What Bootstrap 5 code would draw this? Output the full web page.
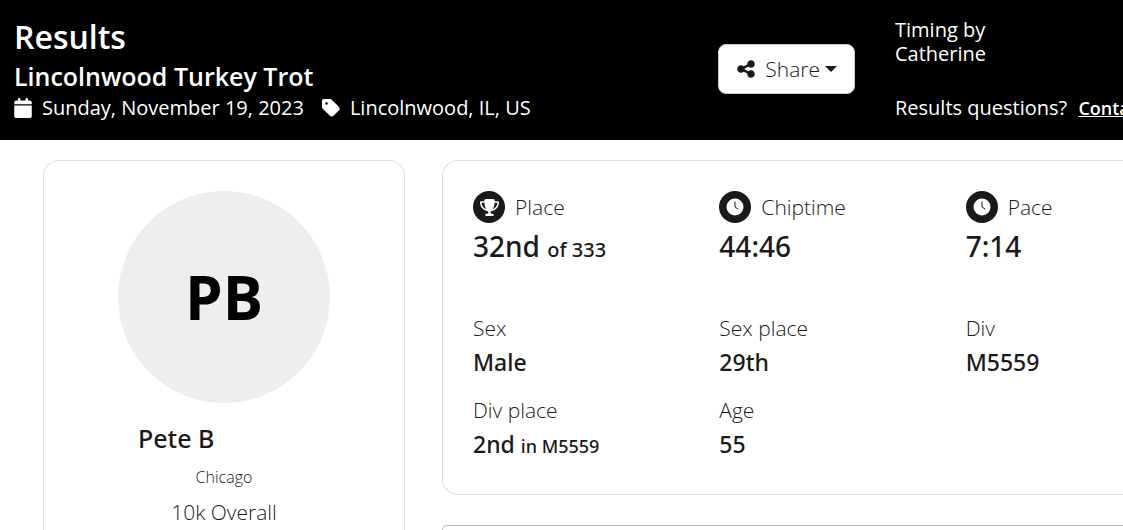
<!DOCTYPE html>
<html lang="en">
<head>
<meta charset="utf-8">
<meta name="viewport" content="width=device-width, initial-scale=1">
<title>Results - Lincolnwood Turkey Trot</title>
<link rel="stylesheet" href="https://cdn.jsdelivr.net/npm/bootstrap@5.3.0/dist/css/bootstrap.min.css">
<style>
  body { font-family: "Open Sans", "Noto Sans", sans-serif; font-size: 21px; font-weight: 300; line-height: 24px; color: #1a1a1a; overflow-x: hidden; }
  svg { fill: currentColor; flex: none; }
  .icon-gap { gap: 10px; }
  .event-bar { display: grid; grid-template-columns: 1fr auto 228px; column-gap: 40px; background: #000; color: #fff; font-size: 20px; font-weight: 400; padding: 18px 0 20px 14px; }
  .event-bar h1 { font-size: 32px; font-weight: 600; line-height: 38px; }
  .event-bar h2 { font-size: 25px; font-weight: 600; line-height: 40px; }
  .event-meta { column-gap: 18px; }
  .share-btn { --bs-btn-border-radius: 8px; font-size: 21px; font-weight: 300; line-height: 30px; padding: 9px 17px 9px 18px; background: #fff; border-color: #ccc; color: #1a1a1a; }
  .share-btn::after { margin-left: -5px; }
  .questions { margin-top: 30px; }
  .contact-link { font-size: 18px; font-weight: 600; line-height: 20px; margin-left: 6px; }
  .page-body { display: grid; grid-template-columns: 362px minmax(0, 1fr); column-gap: 37px; padding: 20px 0 0 43px; }
  .panel { border: 1px solid #dedede; border-radius: 16px; }
  .panel-wide { border-right: 0; border-radius: 16px 0 0 16px; }
  .panel-next { border-color: #b8b8b8; border-bottom: 0; border-radius: 8px 0 0 0; margin-top: 30px; padding: 2px; }
  .profile { border-bottom: 0; border-radius: 16px 16px 0 0; padding: 30px 20px 5px; }
  .avatar { width: 212px; height: 212px; background: #eee; color: #000; font-size: 60px; font-weight: 700; }
  .runner { font-family: "Noto Sans", sans-serif; font-size: 25px; font-weight: 500; line-height: 32px; width: 172px; margin: 19px 0 11px; }
  .town { font-size: 16px; margin-bottom: 11px; }
  .stats { display: grid; grid-template-columns: 37.9% 37.9% 24.2%; padding: 30px 0 32px 30px; }
  .stat-icon { width: 32px; height: 32px; background: #1a1a1a; color: #fff; }
  .stats dt { font-weight: 300; line-height: 22px; }
  .stats dd { font-size: 23px; font-family: "Noto Sans", sans-serif; font-weight: 500; line-height: 32px; margin: 7px 0 21px; }
  .stats dd span { font-size: 18px; }
  .stats .headline dd { font-size: 28px; line-height: 36px; margin: 5px 0 49px; }
  .stats .headline dd span { font-size: 20px; }
  .stats .last dd { margin-bottom: 0; }
</style>
</head>
<body>
<header class="event-bar">
  <div>
    <h1 class="m-0">Results</h1>
    <h2 class="m-0">Lincolnwood Turkey Trot</h2>
    <div class="event-meta d-flex text-nowrap">
      <div class="icon-gap d-flex align-items-center">
        <svg width="18" height="20" viewBox="0 0 448 512" aria-hidden="true"><path d="M96 32V64H48C21.500 64 0 85.500 0 112v48H448V112c0-26.500-21.500-48-48-48H352V32c0-17.700-14.300-32-32-32s-32 14.300-32 32V64H160V32c0-17.700-14.300-32-32-32S96 14.300 96 32zM448 192H0V464c0 26.500 21.500 48 48 48H400c26.500 0 48-21.500 48-48V192z"/></svg>
        <span>Sunday, November 19, 2023</span>
      </div>
      <div class="icon-gap d-flex align-items-center">
        <svg width="18" height="18" viewBox="32 32 448 448" aria-hidden="true"><path d="M32 80v149.500c0 17 6.700 33.300 18.700 45.300l176 176c25 25 65.500 25 90.500 0L450.700 317.300c25-25 25-65.500 0-90.500l-176-176C262.700 38.700 246.500 32 229.500 32H80C53.500 32 32 53.500 32 80zm112 32a32 32 0 1 1 0 64 32 32 0 1 1 0-64z"/></svg>
        <span>Lincolnwood, IL, US</span>
      </div>
    </div>
  </div>
  <div class="dropdown align-self-center">
    <button class="btn share-btn dropdown-toggle icon-gap d-flex align-items-center" type="button" data-bs-toggle="dropdown" aria-expanded="false"><svg width="18" height="20" viewBox="0 0 448 512" aria-hidden="true"><path d="M352 224c53 0 96-43 96-96s-43-96-96-96-96 43-96 96c0 4 .2 8 .7 11.900l-94.100 47C145.400 170.200 121.900 160 96 160c-53 0-96 43-96 96s43 96 96 96c25.900 0 49.400-10.200 66.600-26.900l94.100 47c-.5 3.900-.7 7.800-.7 11.900 0 53 43 96 96 96s96-43 96-96-43-96-96-96c-25.900 0-49.400 10.200-66.600 26.900l-94.100-47c.5-3.900.7-7.800.7-11.900s-.2-8-.7-11.900l94.100-47C302.600 213.800 326.100 224 352 224z"/></svg>Share</button>
    <ul class="dropdown-menu"><li><a class="dropdown-item" href="#">Copy link</a></li></ul>
  </div>
  <div class="text-nowrap overflow-hidden">
    <div>Timing by<br>Catherine</div>
    <div class="questions">Results questions? <a class="contact-link text-white" href="#">Contact</a></div>
  </div>
</header>

<main class="page-body">
  <section class="panel profile d-flex flex-column align-items-center">
    <div class="avatar rounded-circle d-flex align-items-center justify-content-center">PB</div>
    <div class="runner">Pete B</div>
    <div class="town">Chicago</div>
    <div>10k Overall</div>
  </section>
  <div>
    <dl class="panel panel-wide stats mb-0">
      <div class="headline">
        <dt class="icon-gap d-flex align-items-center"><span class="stat-icon rounded-circle d-flex align-items-center justify-content-center"><svg width="19" height="17" viewBox="0 0 576 512" aria-hidden="true"><path d="M400 0H176c-26.500 0-48.100 21.800-47.100 48.200.2 5.300.4 10.600.7 15.800H24C10.700 64 0 74.700 0 88c0 92.600 33.500 157 78.500 200.700 44.300 43.100 98.300 64.800 138.100 75.800 23.400 6.500 39.400 26 39.400 45.600 0 20.900-17 37.900-37.900 37.900H192c-17.700 0-32 14.300-32 32s14.300 32 32 32H384c17.700 0 32-14.300 32-32s-14.300-32-32-32H357.900C337 448 320 431 320 410.100c0-19.600 15.900-39.200 39.400-45.600 39.900-11 93.900-32.700 138.200-75.800C542.500 245 576 180.600 576 88c0-13.300-10.700-24-24-24H446.400c.3-5.200.5-10.400.7-15.800C448.100 21.800 426.500 0 400 0zM48.900 112h84.400c9.100 90.100 29.200 150.300 51.900 190.600-24.900-11-50.800-26.500-73.200-48.300-32-31.100-58-76-63-142.300zM464.100 254.300c-22.400 21.800-48.300 37.300-73.200 48.300 22.700-40.300 42.800-100.500 51.900-190.600h84.400c-5.100 66.300-31.100 111.200-63.100 142.300z"/></svg></span><span>Place</span></dt>
        <dd>32nd <span>of 333</span></dd>
      </div>
      <div class="headline">
        <dt class="icon-gap d-flex align-items-center"><span class="stat-icon rounded-circle d-flex align-items-center justify-content-center"><svg width="18" height="18" viewBox="0 0 18 18" aria-hidden="true"><circle cx="9" cy="9" r="8.500"/><path d="M9 4v5l3 2" fill="none" stroke="#1a1a1a" stroke-width="1" stroke-linecap="round"/></svg></span><span>Chiptime</span></dt>
        <dd>44:46</dd>
      </div>
      <div class="headline">
        <dt class="icon-gap d-flex align-items-center"><span class="stat-icon rounded-circle d-flex align-items-center justify-content-center"><svg width="18" height="18" viewBox="0 0 18 18" aria-hidden="true"><circle cx="9" cy="9" r="8.500"/><path d="M9 4v5l3 2" fill="none" stroke="#1a1a1a" stroke-width="1" stroke-linecap="round"/></svg></span><span>Pace</span></dt>
        <dd>7:14</dd>
      </div>
      <div><dt>Sex</dt><dd>Male</dd></div>
      <div><dt>Sex place</dt><dd>29th</dd></div>
      <div><dt>Div</dt><dd>M5559</dd></div>
      <div class="last"><dt>Div place</dt><dd>2nd <span>in M5559</span></dd></div>
      <div class="last"><dt>Age</dt><dd>55</dd></div>
    </dl>
    <div class="panel panel-wide panel-next"></div>
  </div>
</main>
<script src="https://cdn.jsdelivr.net/npm/bootstrap@5.3.0/dist/js/bootstrap.bundle.min.js"></script>
</body>
</html>
